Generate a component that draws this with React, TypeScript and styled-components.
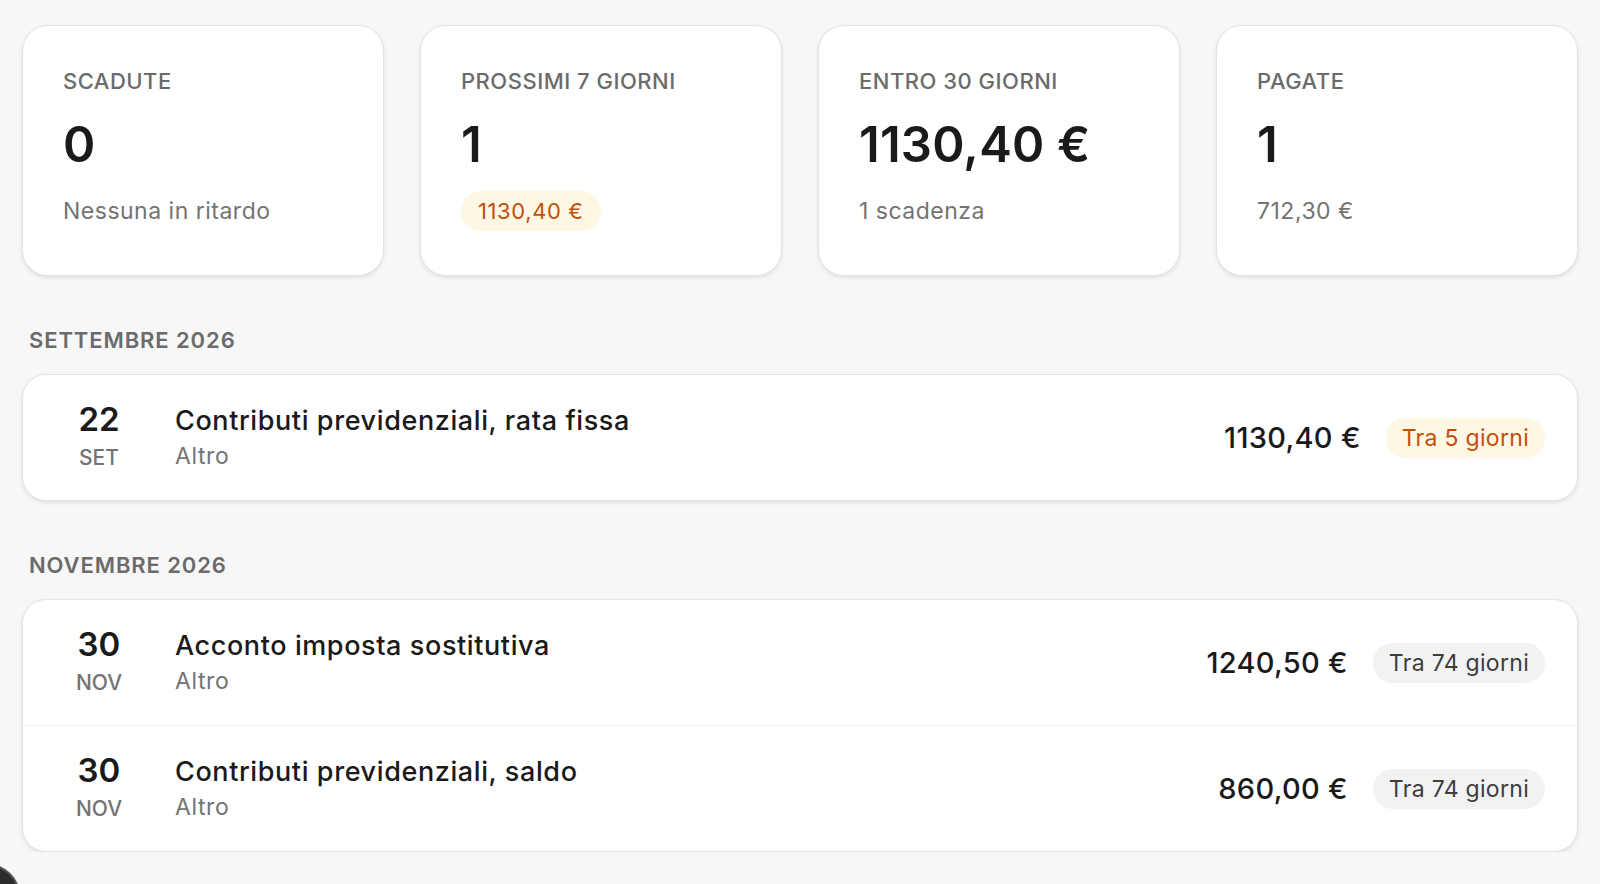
import React from "react";
import styled, { createGlobalStyle } from "styled-components";

const COLORS = {
  page: "#f7f7f7",
  card: "#ffffff",
  border: "#e4e4e4",
  ink: "#1a1a1a",
  muted: "#737373",
  label: "#6b6b6b",
  warnBg: "#fdf7e4",
  warnText: "#c2500c",
  neutralBg: "#f2f2f2",
  neutralText: "#3d3d3d",
  divider: "#efefef",
};

type Tone = "warn" | "neutral";

const stats = [
  { label: "SCADUTE", value: "0", sub: "Nessuna in ritardo" },
  { label: "PROSSIMI 7 GIORNI", value: "1", pill: "1130,40 €" },
  { label: "ENTRO 30 GIORNI", value: "1130,40 €", sub: "1 scadenza" },
  { label: "PAGATE", value: "1", sub: "712,30 €" },
];

const groups = [
  {
    month: "SETTEMBRE 2026",
    items: [
      {
        day: "22",
        mon: "SET",
        title: "Contributi previdenziali, rata fissa",
        category: "Altro",
        amount: "1130,40 €",
        due: "Tra 5 giorni",
        tone: "warn" as Tone,
      },
    ],
  },
  {
    month: "NOVEMBRE 2026",
    items: [
      {
        day: "30",
        mon: "NOV",
        title: "Acconto imposta sostitutiva",
        category: "Altro",
        amount: "1240,50 €",
        due: "Tra 74 giorni",
        tone: "neutral" as Tone,
      },
      {
        day: "30",
        mon: "NOV",
        title: "Contributi previdenziali, saldo",
        category: "Altro",
        amount: "860,00 €",
        due: "Tra 74 giorni",
        tone: "neutral" as Tone,
      },
    ],
  },
];

function App() {
  return (
    <>
      <GlobalStyle />
      <Page>
        <StatGrid>
          {stats.map((s) => (
            <StatCard key={s.label}>
              <StatLabel>{s.label}</StatLabel>
              <StatValue>{s.value}</StatValue>
              {s.pill ? (
                <StatPill>{s.pill}</StatPill>
              ) : (
                <StatSub>{s.sub}</StatSub>
              )}
            </StatCard>
          ))}
        </StatGrid>

        {groups.map((g) => (
          <Section key={g.month}>
            <SectionTitle>{g.month}</SectionTitle>
            <ListCard>
              {g.items.map((it, i) => (
                <Row key={i}>
                  <DateCol>
                    <Day>{it.day}</Day>
                    <Mon>{it.mon}</Mon>
                  </DateCol>
                  <Info>
                    <Title>{it.title}</Title>
                    <Category>{it.category}</Category>
                  </Info>
                  <Amount>{it.amount}</Amount>
                  <DueBadge tone={it.tone}>{it.due}</DueBadge>
                </Row>
              ))}
            </ListCard>
          </Section>
        ))}
      </Page>
      <CornerBubble />
    </>
  );
}

const GlobalStyle = createGlobalStyle`
  html, body {
    margin: 0;
    background: ${COLORS.page};
    font-family: Inter, "Noto Sans", sans-serif;
    color: ${COLORS.ink};
    overflow: hidden;
  }
`;

const Page = styled.div`
  padding: 25px 22px 0 22px;
`;

const StatGrid = styled.div`
  display: grid;
  grid-template-columns: repeat(4, 1fr);
  gap: 36px;
`;

const StatCard = styled.div`
  background: ${COLORS.card};
  border: 1px solid ${COLORS.border};
  border-radius: 26px;
  box-shadow: 0 2px 4px rgba(0, 0, 0, 0.09);
  padding: 41px 40px 44px 40px;
  display: flex;
  flex-direction: column;
  align-items: flex-start;
`;

const StatLabel = styled.div`
  font-size: 22px;
  line-height: 28px;
  font-weight: 500;
  letter-spacing: 0.5px;
  color: ${COLORS.label};
`;

const StatValue = styled.div`
  margin-top: 22px;
  font-size: 49px;
  line-height: 56px;
  font-weight: 600;
  letter-spacing: 0.2px;
  color: ${COLORS.ink};
`;

const StatSub = styled.div`
  margin-top: 18px;
  font-size: 23px;
  line-height: 40px;
  letter-spacing: 0.5px;
  color: ${COLORS.muted};
`;

const StatPill = styled.div`
  margin-top: 18px;
  height: 40px;
  line-height: 40px;
  padding: 0 17px;
  border-radius: 20px;
  background: ${COLORS.warnBg};
  color: ${COLORS.warnText};
  font-size: 22px;
  font-weight: 400;
  letter-spacing: 0.6px;
`;

const Section = styled.section`
  margin-top: 50px;
`;

const SectionTitle = styled.h2`
  margin: 0 0 20px 0;
  padding-left: 7px;
  font-size: 22px;
  line-height: 28px;
  font-weight: 600;
  letter-spacing: 0.9px;
  color: ${COLORS.label};
`;

const ListCard = styled.div`
  background: ${COLORS.card};
  border: 1px solid ${COLORS.border};
  border-radius: 24px;
  box-shadow: 0 2px 4px rgba(0, 0, 0, 0.09);
  overflow: hidden;
`;

const Row = styled.div`
  display: flex;
  align-items: center;
  height: 125px;
  padding: 0 32px 0 40px;
  & + & {
    border-top: 1px solid ${COLORS.divider};
  }
`;

const DateCol = styled.div`
  width: 72px;
  display: flex;
  flex-direction: column;
  align-items: center;
  margin-right: 40px;
  margin-top: -4px;
`;

const Day = styled.div`
  font-size: 33px;
  line-height: 36px;
  font-weight: 600;
  color: ${COLORS.ink};
`;

const Mon = styled.div`
  margin-top: 8px;
  font-size: 21px;
  line-height: 26px;
  font-weight: 500;
  color: ${COLORS.muted};
`;

const Info = styled.div`
  flex: 1;
  display: flex;
  flex-direction: column;
  gap: 4px;
`;

const Title = styled.div`
  font-size: 27px;
  line-height: 32px;
  font-weight: 500;
  letter-spacing: 0.6px;
  color: ${COLORS.ink};
`;

const Category = styled.div`
  font-size: 23px;
  line-height: 30px;
  letter-spacing: 0.6px;
  color: ${COLORS.muted};
`;

const Amount = styled.div`
  margin-right: 25px;
  font-size: 29px;
  line-height: 40px;
  font-weight: 500;
  letter-spacing: 0.3px;
  color: ${COLORS.ink};
`;

const DueBadge = styled.div<{ tone: Tone }>`
  height: 40px;
  line-height: 40px;
  padding: 0 16px;
  border-radius: 20px;
  font-size: 23px;
  font-weight: 400;
  letter-spacing: 0.3px;
  background: ${(p) => (p.tone === "warn" ? COLORS.warnBg : COLORS.neutralBg)};
  color: ${(p) => (p.tone === "warn" ? COLORS.warnText : COLORS.neutralText)};
`;

const CornerBubble = styled.div`
  position: fixed;
  left: -44px;
  bottom: -44px;
  width: 60px;
  height: 60px;
  border-radius: 50%;
  background: #2b2b2b;
  border: 2px solid #555;
`;

export default App;
